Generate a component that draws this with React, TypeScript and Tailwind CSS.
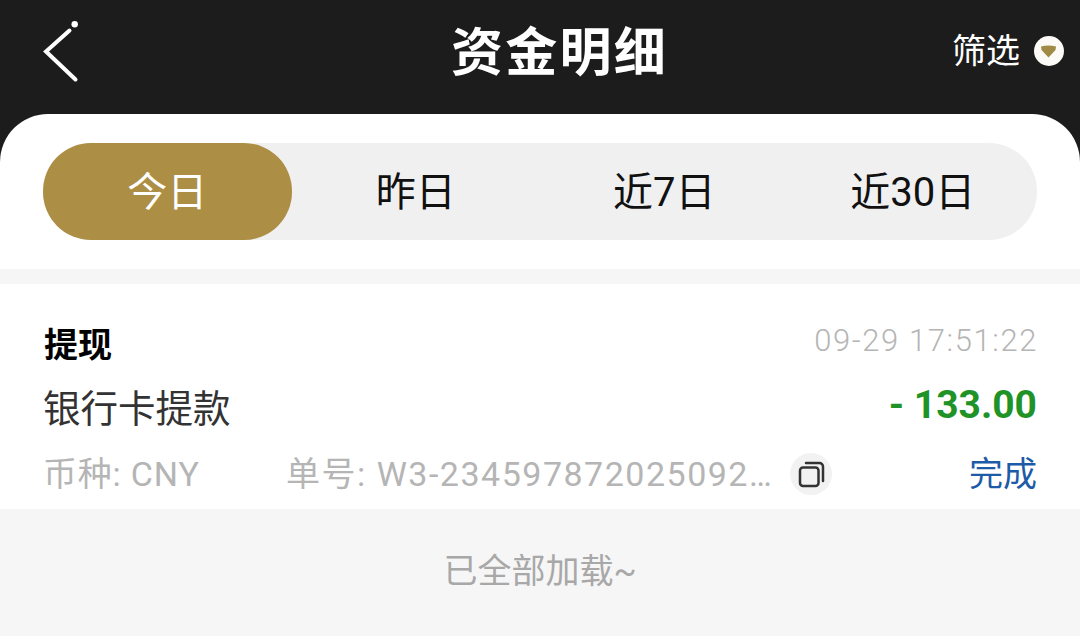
const font = { fontFamily: '"Roboto", "Noto Sans CJK SC", sans-serif' };

const tabs = ["今日", "昨日", "近7日", "近30日"];

const BackIcon = () => (
  <svg width="40" height="64" viewBox="0 0 40 64" className="block">
    <path d="M26.5 9.5 L3 30.5 L32.5 58.5" fill="none" stroke="#fff" strokeWidth="4" strokeLinecap="round" />
    <circle cx="31.7" cy="3.2" r="3.2" fill="#fff" />
  </svg>
);

const FilterBadge = () => (
  <div className="flex h-[30px] w-[30px] items-center justify-center rounded-full bg-[#fbfaf6]">
    <svg width="17" height="13" viewBox="0 0 17 13">
      <path d="M1 1.5 Q8.5 -0.5 16 1.5 L15.5 5 L8.5 12.5 L1.5 5 Z" fill="#a08a45" />
    </svg>
  </div>
);

const CopyIcon = () => (
  <div className="flex h-[42px] w-[42px] items-center justify-center rounded-full bg-[#f2f2f2]">
    <svg width="27" height="27" viewBox="0 0 27 27" fill="none" stroke="#333" strokeWidth="2.5">
      <rect x="2" y="6.5" width="18.5" height="18.5" rx="3" />
      <path d="M8 2 H21.5 A3.5 3.5 0 0 1 25 5.5 V20" strokeLinecap="round" />
    </svg>
  </div>
);

export default function App() {
  return (
    <div style={font} className="flex h-[636px] w-[1080px] flex-col overflow-hidden bg-[#1c1c1c]">
      <header className="flex h-[114px] shrink-0 items-start justify-between pl-[43px] pr-[16px]">
        <div className="mt-[21px]">
          <BackIcon />
        </div>
        <h1 className="mt-[22px] ml-[84px] text-[52px] leading-[64px] font-bold tracking-[2.3px] text-white">资金明细</h1>
        <div className="mt-[29px] flex items-center gap-[14px]">
          <span className="text-[34px] leading-[44px] text-white">筛选</span>
          <FilterBadge />
        </div>
      </header>

      <main className="flex flex-1 flex-col overflow-hidden rounded-t-[48px] bg-white">
        <div className="px-[43px] pt-[29px] pb-[29px]">
          <div className="grid h-[97px] grid-cols-4 rounded-[48px] bg-[#f0f0f0]">
            {tabs.map((t, i) => (
              <div
                key={t}
                className={
                  i === 0
                    ? "flex items-center justify-center rounded-[48px] bg-[#ad8e45] pt-[2px] text-[40px] text-white"
                    : "flex items-center justify-center pt-[2px] text-[40px] text-[#111]"
                }
              >
                {t}
              </div>
            ))}
          </div>
        </div>

        <div className="h-[15px] shrink-0 bg-[#f6f6f6]" />

        <section className="h-[225px] shrink-0 px-[43px] pt-[38px]">
          <div className="flex h-[46px] items-start justify-between">
            <span className="ml-[1px] text-[34px] leading-[46px] font-bold text-black">提现</span>
            <span className="-mt-[4px] -mr-[1px] text-[31px] leading-[46px] font-light tracking-[1.6px] text-[#b5b5b5]">09-29 17:51:22</span>
          </div>
          <div className="mt-[15px] flex h-[52px] items-start justify-between">
            <span className="text-[37.5px] leading-[52px] text-[#333]">银行卡提款</span>
            <span className="-mt-[4px] text-[39px] leading-[52px] font-bold text-[#1f9327]">- 133.00</span>
          </div>
          <div className="mt-[17px] flex items-center text-[34px] leading-[44px] text-[#b5b5b5]">
            <span className="w-[243px] shrink-0 tracking-[0.8px]">币种: CNY</span>
            <span className="w-[502px] shrink-0 truncate tracking-[1.5px]">单号: W3-234597872025092…</span>
            <div className="ml-[2px]">
              <CopyIcon />
            </div>
            <span className="ml-auto text-[#1d5ba8]">完成</span>
          </div>
        </section>

        <footer className="flex flex-1 items-start justify-center bg-[#f6f6f6] pt-[39px] text-[34px] leading-[46px] text-[#a8a8a8]">
          已全部加载~
        </footer>
      </main>
    </div>
  );
}
